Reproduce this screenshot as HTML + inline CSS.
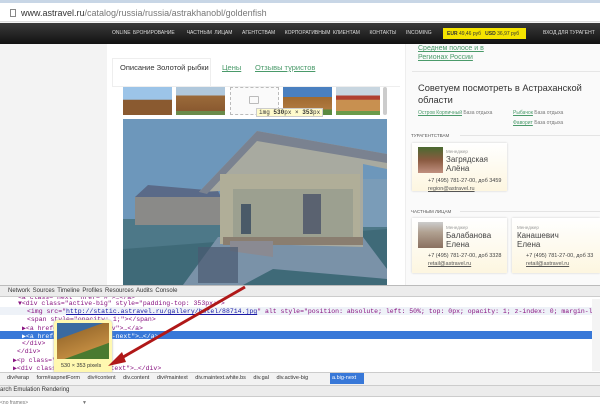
<!DOCTYPE html><html><head><meta charset="utf-8"><style>
*{margin:0;padding:0;box-sizing:border-box}
body{width:600px;height:415px;overflow:hidden;background:#f3f3f3;font-family:"Liberation Sans",sans-serif;position:relative}
.a{position:absolute}
.mono{font-family:"Liberation Mono",monospace;font-size:6.5px;white-space:nowrap;color:#881280}
#dt{position:absolute;left:0;top:297px;width:600px;height:75px;background:#fff;overflow:hidden}
</style></head><body>
<div class="a" style="left:0;top:0;width:600px;height:22px;background:#fff;border-bottom:1px solid #ddd"></div>
<div class="a" style="left:0;top:0;width:600px;height:3px;background:#c8d6e6"></div>
<div class="a" style="left:10px;top:9px;width:6px;height:8px;border:1px solid #888"></div>
<div class="a" style="left:21px;top:8px;font-size:9px;color:#333">www.astravel.ru<span style="color:#777">/catalog/russia/russia/astrakhanobl/goldenfish</span></div>
<div class="a" style="left:0;top:23px;width:600px;height:21px;background:linear-gradient(#3a3a3a,#111)"></div>
<div class="a" style="left:112px;top:30px;font-size:5px;color:#ddd;white-space:nowrap;word-spacing:1px">ONLINE БРОНИРОВАНИЕ &nbsp;&nbsp;&nbsp; ЧАСТНЫМ ЛИЦАМ &nbsp;&nbsp; АГЕНТСТВАМ &nbsp;&nbsp; КОРПОРАТИВНЫМ КЛИЕНТАМ &nbsp;&nbsp; КОНТАКТЫ &nbsp;&nbsp; INCOMING</div>
<div class="a" style="left:443px;top:28px;width:83px;height:11px;background:#f5e400;font-size:5px;color:#333;padding:3px 4px;white-space:nowrap"><b>EUR</b> 49,46 руб &nbsp; <b>USD</b> 36,97 руб</div>
<div class="a" style="left:543px;top:30px;font-size:5px;color:#ddd;white-space:nowrap">ВХОД ДЛЯ ТУРАГЕНТ</div>
<div class="a" style="left:107px;top:44px;width:298px;height:241px;background:#fff"></div>
<div class="a" style="left:112px;top:58px;width:99px;height:28px;background:#fff;border:1px solid #eee;border-bottom:none"></div>
<div class="a" style="left:120px;top:63px;font-size:7.5px;color:#333">Описание Золотой рыбки</div>
<div class="a" style="left:222px;top:63px;font-size:7.5px;color:#4a9a6a;text-decoration:underline">Цены</div>
<div class="a" style="left:255px;top:63px;font-size:7.5px;color:#4a9a6a;text-decoration:underline">Отзывы туристов</div>
<div class="a" style="left:112px;top:86px;width:288px;height:1px;background:#eee"></div>
<div class="a" style="left:123px;top:87px;width:49px;height:28px;background:linear-gradient(#9cc4e8 45%,#8a5a30 46%)"></div>
<div class="a" style="left:176px;top:87px;width:49px;height:28px;background:linear-gradient(#b0c8dc 30%,#9b6a3a 31%,#8a5a30 85%,#6a8a4a 86%)"></div>
<div class="a" style="left:230px;top:87px;width:49px;height:28px;border:1px dashed #bbb;background:#fafafa"></div>
<div class="a" style="left:249px;top:96px;width:10px;height:8px;border:1px solid #bbb;border-radius:1px"></div>
<div class="a" style="left:283px;top:87px;width:49px;height:28px;background:linear-gradient(#4a80c0 35%,#a06a30 36%,#b07a40 80%,#5a8a40 81%)"></div>
<div class="a" style="left:336px;top:87px;width:44px;height:28px;background:linear-gradient(#c8d6e0 30%,#b04030 31%,#b04030 45%,#c89050 46%,#c89050 85%,#6a9a4a 86%)"></div>
<div class="a" style="left:383px;top:87px;width:4px;height:28px;background:#ccc;border-radius:2px"></div>
<div class="a mono" style="left:256px;top:108px;background:#fffbcc;border:1px solid #ccc;padding:0 2px;color:#333;font-size:6px">img <b>530</b>px × <b>353</b>px</div>
<svg class="a" style="left:123px;top:119px" width="264" height="166" viewBox="0 0 264 166">
<rect width="264" height="166" fill="#6d97bb"/>
<rect y="100" width="264" height="66" fill="#4d7888"/>
<polygon points="0,130 264,110 264,166 0,166" fill="#3f6a78"/>
<polygon points="95,118 240,118 264,150 264,160 150,150 120,166 60,166" fill="#7a92a8"/>
<polygon points="12,78 25,66 95,72 99,80" fill="#5a6a88"/>
<rect x="12" y="78" width="87" height="28" fill="#8a8a88"/>
<polygon points="76,73 134,12 264,35 264,50 240,45 240,128 97,124 97,72" fill="#a8aaa0"/>
<polygon points="134,12 76,73 84,75 134,22 264,44 264,35" fill="#7a8290"/>
<rect x="97" y="55" width="140" height="70" fill="#b0ae98"/>
<rect x="110" y="70" width="120" height="52" fill="#9ca090"/>
<rect x="118" y="85" width="10" height="30" fill="#4a5a68"/>
<rect x="180" y="75" width="18" height="40" fill="#5a6270"/>
<rect x="100" y="118" width="140" height="8" fill="#8a7e70"/>
<polygon points="107,122 150,122 150,138 107,132" fill="#8a8a92"/>
<rect x="75" y="128" width="40" height="36" fill="#4a5a70" opacity=".7"/>
<rect x="240" y="60" width="24" height="48" fill="#7a9cb8"/>
</svg>
<div class="a" style="left:405px;top:44px;width:195px;height:241px;background:#fafafa;border-left:1px solid #eee"></div>
<div class="a" style="left:418px;top:44px;font-size:7px;color:#4a9a6a;text-decoration:underline;line-height:9px">Среднем полосе и в<br>Регионах России</div>
<div class="a" style="left:412px;top:71px;width:188px;height:1px;background:#e6e6e6"></div>
<div class="a" style="left:418px;top:82px;font-size:9.3px;color:#333;line-height:12px">Советуем посмотреть в Астраханской<br>области</div>
<div class="a" style="left:418px;top:110px;font-size:5px;color:#777"><u style="color:#4a9a6a">Остров Корпичный</u> База отдыха</div>
<div class="a" style="left:513px;top:110px;font-size:5px;color:#777"><u style="color:#4a9a6a">Рыбачок</u> База отдыха</div>
<div class="a" style="left:513px;top:120px;font-size:5px;color:#777"><u style="color:#4a9a6a">Фаворит</u> База отдыха</div>
<div class="a" style="left:411px;top:133px;font-size:4.5px;color:#555">ТУРАГЕНТСТВАМ</div>
<div class="a" style="left:460px;top:135px;width:140px;height:1px;background:#e4e4e4"></div>
<div class="a" style="left:412px;top:143px;width:95px;height:48px;background:linear-gradient(#fff,#fdf6e0);box-shadow:0 0 2px #ccc"></div>
<div class="a" style="left:418px;top:147px;width:25px;height:26px;background:linear-gradient(#4a6a30,#8a5a40 50%,#c09080)"></div>
<div class="a" style="left:446px;top:149px;font-size:4.5px;color:#999">Менеджер</div>
<div class="a" style="left:446px;top:155px;font-size:8px;color:#444;line-height:9px">Загрядская<br>Алёна</div>
<div class="a" style="left:428px;top:178px;font-size:5.5px;color:#444">+7 (495) 781-27-00, доб 3459</div>
<div class="a" style="left:428px;top:186px;font-size:5.5px;color:#555;text-decoration:underline">region@astravel.ru</div>
<div class="a" style="left:411px;top:209px;font-size:4.5px;color:#555">ЧАСТНЫМ ЛИЦАМ</div>
<div class="a" style="left:460px;top:211px;width:140px;height:1px;background:#e4e4e4"></div>
<div class="a" style="left:412px;top:218px;width:95px;height:55px;background:linear-gradient(#fff,#fdf6e0);box-shadow:0 0 2px #ccc"></div>
<div class="a" style="left:418px;top:222px;width:25px;height:26px;background:linear-gradient(#ccc,#b0a090 40%,#8a7060)"></div>
<div class="a" style="left:446px;top:225px;font-size:4.5px;color:#999">Менеджер</div>
<div class="a" style="left:446px;top:231px;font-size:8px;color:#444;line-height:9px">Балабанова<br>Елена</div>
<div class="a" style="left:428px;top:253px;font-size:5.5px;color:#444">+7 (495) 781-27-00, доб 3328</div>
<div class="a" style="left:428px;top:261px;font-size:5.5px;color:#555;text-decoration:underline">retail@astravel.ru</div>
<div class="a" style="left:512px;top:218px;width:88px;height:55px;background:linear-gradient(#fff,#fdf6e0);box-shadow:0 0 2px #ccc"></div>
<div class="a" style="left:517px;top:225px;font-size:4.5px;color:#999">Менеджер</div>
<div class="a" style="left:517px;top:231px;font-size:8px;color:#444;line-height:9px">Канашевич<br>Елена</div>
<div class="a" style="left:526px;top:253px;font-size:5.5px;color:#444;white-space:nowrap">+7 (495) 781-27-00, доб 33</div>
<div class="a" style="left:526px;top:261px;font-size:5.5px;color:#555;text-decoration:underline">retail@astravel.ru</div>
<div class="a" style="left:0;top:285px;width:600px;height:12px;background:#ececec;border-top:1px solid #bbb;border-bottom:1px solid #ccc"></div>
<div class="a" style="left:8px;top:288px;font-size:6px;color:#333;word-spacing:1px">Network Sources Timeline Profiles Resources Audits Console</div>
<div id="dt">
<div class="a" style="left:0;top:10px;width:600px;height:8px;background:#eef2f8"></div>
<div class="a" style="left:0;top:34px;width:592px;height:8px;background:#3878d8"></div>
<div class="a mono" style="left:18px;top:-3px">&lt;a class="next" href="#"&gt;…&lt;/a&gt;</div>
<div class="a mono" style="left:18px;top:3px">▼&lt;div class="active-big" style="padding-top: 353px;"&gt;</div>
<div class="a mono" style="left:27px;top:11px">&lt;img src="<u style="color:#1a1aa6">http://static.astravel.ru/gallery/hotel/88714.jpg</u>" alt style="position: absolute; left: 50%; top: 0px; opacity: 1; z-index: 0; margin-left: -265px;"&gt;</div>
<div class="a mono" style="left:27px;top:19px">&lt;span style="opacity: 1;"&gt;&lt;/span&gt;</div>
<div class="a mono" style="left:22px;top:27px">▶&lt;a href="#" class="prev"&gt;…&lt;/a&gt;</div>
<div class="a mono" style="left:22px;top:35px;color:#fff">▶&lt;a href="#" class="big-next"&gt;…&lt;/a&gt;</div>
<div class="a mono" style="left:22px;top:43px">&lt;/div&gt;</div>
<div class="a mono" style="left:17px;top:51px">&lt;/div&gt;</div>
<div class="a mono" style="left:13px;top:59px">▶&lt;p class="..."&gt;…&lt;/p&gt;</div>
<div class="a mono" style="left:13px;top:67px">▶&lt;div class="description text"&gt;…&lt;/div&gt;</div>
<div class="a" style="left:592px;top:2px;width:8px;height:72px;background:#f4f4f4"></div>
</div>
<div class="a" style="left:54px;top:320px;width:58px;height:55px;background:#fff8b0;border-radius:4px;box-shadow:0 0 2px #aa9"></div>
<div class="a" style="left:57px;top:323px;width:52px;height:36px;background:linear-gradient(160deg,#3a6aa0 30%,#a07030 31%,#c08a40 70%,#4a7a30 71%)"></div>
<div class="a" style="left:61px;top:363px;font-size:5.5px;color:#333">530 × 353 pixels</div>
<svg class="a" style="left:0;top:0" width="600" height="415"><line x1="245" y1="287" x2="118" y2="360" stroke="#b01818" stroke-width="3"/><polygon points="108,366 122,352 126,362" fill="#b01818"/></svg>
<div class="a" style="left:0;top:372px;width:600px;height:13px;background:#f2f2f2;border-top:1px solid #ccc"></div>
<div class="a" style="left:7px;top:375px;font-size:5.5px;color:#333;white-space:nowrap;word-spacing:6px">div#wrap form#aspnetForm div#content div.content div#maintext div.maintext.white.bs div.gal div.active-big</div>
<div class="a" style="left:330px;top:373px;width:34px;height:11px;background:#3878d8;color:#fff;font-size:5.5px;padding:2px">a.big-next</div>
<div class="a" style="left:0;top:385px;width:600px;height:12px;background:#ececec;border-top:1px solid #ccc;border-bottom:1px solid #ccc"></div>
<div class="a" style="left:0;top:387px;font-size:6px;color:#333">arch Emulation Rendering</div>
<div class="a" style="left:0;top:397px;width:600px;height:18px;background:#fff"></div>
<div class="a" style="left:0;top:400px;font-size:5px;color:#777;white-space:nowrap">&lt;no frames&gt;</div>
<div class="a" style="left:82px;top:400px;font-size:5px;color:#777">▼</div>
</body></html>
